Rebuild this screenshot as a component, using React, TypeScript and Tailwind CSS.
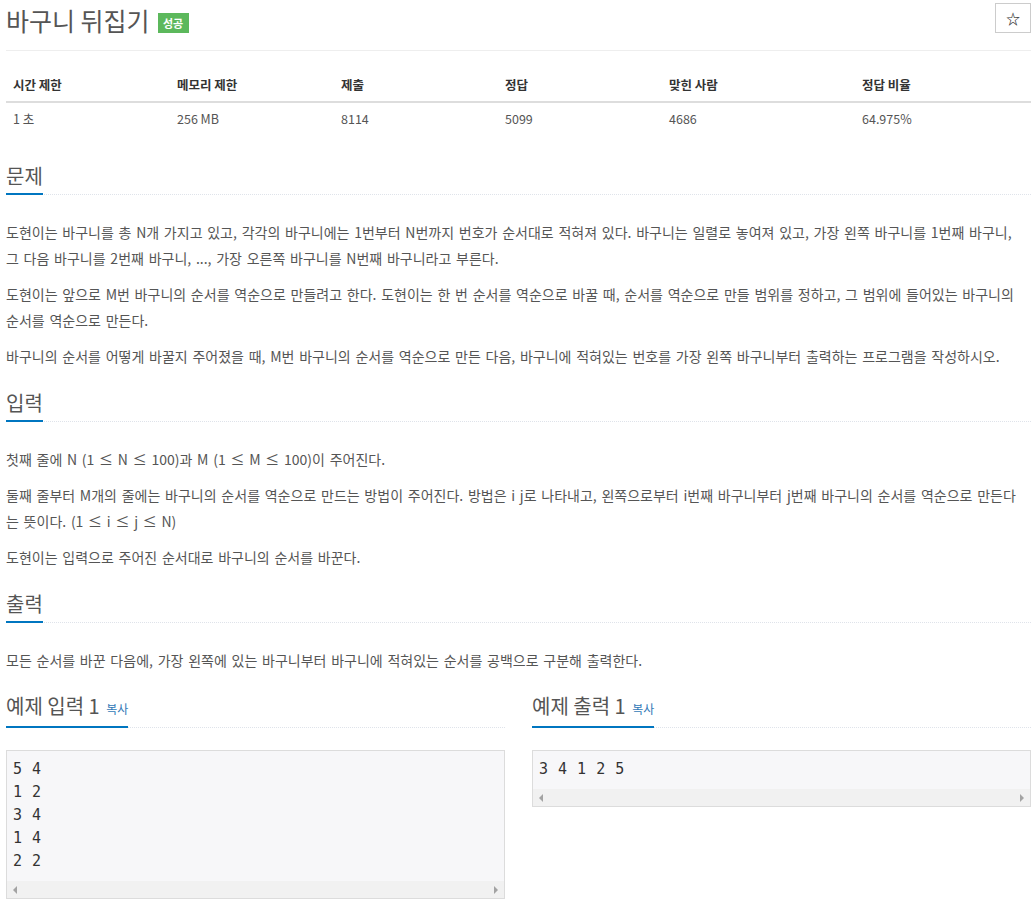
import React from 'react';

const font = { fontFamily: '"Noto Sans CJK KR", "Noto Sans", sans-serif' };

const stats = [
    { label: '시간 제한', value: '1 초', w: 'w-[164px]' },
    { label: '메모리 제한', value: '256 MB', w: 'w-[164px]' },
    { label: '제출', value: '8114', w: 'w-[164px]' },
    { label: '정답', value: '5099', w: 'w-[164px]' },
    { label: '맞힌 사람', value: '4686', w: 'w-[193px]' },
    { label: '정답 비율', value: '64.975%', w: 'w-[176px]' },
];

function Headline({ children }: { children: React.ReactNode }) {
    return (
        <div className="border-b border-dotted border-[#dfe3ea] mb-[24px]">
            <h2 className="inline-block border-b-2 border-[#0076c0] mb-[-1px] pb-[2px] text-[20px] leading-[30px] text-[#555] font-normal">
                {children}
            </h2>
        </div>
    );
}

function Para({ children }: { children: React.ReactNode }) {
    return (
        <p className="text-[14px] leading-[26px] text-[#555] mb-[10px] whitespace-nowrap [word-spacing:1.6px]">
            {children}
        </p>
    );
}

function ScrollBar() {
    return (
        <div className="h-[17px] bg-[#f1f1f1] flex items-center justify-between px-[5px]">
            <svg width="6" height="8" viewBox="0 0 6 8">
                <polygon points="5,0 5,8 1,4" fill="#a3a3a3" />
            </svg>
            <svg width="6" height="8" viewBox="0 0 6 8">
                <polygon points="1,0 1,8 5,4" fill="#a3a3a3" />
            </svg>
        </div>
    );
}

function Sample({ title, lines }: { title: string; lines: string[] }) {
    return (
        <div>
            <div className="border-b border-dotted border-[#dfe3ea] mb-[22px]">
                <h2 className="inline-block border-b-2 border-[#0076c0] mb-[-1px] pb-[2px] text-[20px] leading-[30px] text-[#555] font-normal">
                    {title} <span className="text-[12px] text-[#337ab7] ml-[2px]">복사</span>
                </h2>
            </div>
            <div className="border border-[#dcdcdc] bg-[#f7f7f9]">
                <pre
                    className="pt-[7px] pb-[8px] px-[6px] text-[15px] leading-[23px] text-[#333] [word-spacing:1px]"
                    style={{ fontFamily: '"DejaVu Sans Mono", monospace' }}
                >
                    {lines.join('\n')}
                </pre>
                <ScrollBar />
            </div>
        </div>
    );
}

export default function App() {
    return (
        <div className="bg-white min-h-[905px] pl-[6px] pr-[5px]" style={font}>
            {/* Title */}
            <div className="flex justify-between items-start border-b border-[#eee] h-[51px]">
                <div className="flex items-start mt-[5px]">
                    <h1 className="text-[25px] leading-[30px] text-[#555] font-normal">바구니 뒤집기</h1>
                    <span className="ml-[8px] mt-[8px] w-[31px] h-[20px] bg-[#5cb85c] text-white text-[11px] font-bold flex items-center justify-center">
                        성공
                    </span>
                </div>
                <button className="mt-[3px] w-[36px] h-[30px] border border-[#ccc] bg-white flex items-center justify-center text-[14px] font-bold text-[#333]">
                    ☆
                </button>
            </div>

            {/* Stats table */}
            <div className="mt-[18px] mb-[26px]">
                <div className="flex border-b-2 border-[#ddd]">
                    {stats.map((s) => (
                        <div key={s.label} className={`${s.w} px-[7px] py-[7px] text-[12.5px] leading-[18px] font-bold text-[#333]`}>
                            {s.label}
                        </div>
                    ))}
                </div>
                <div className="flex">
                    {stats.map((s) => (
                        <div key={s.label} className={`${s.w} px-[7px] py-[7px] text-[12.5px] leading-[18px] text-[#555]`}>
                            {s.value}
                        </div>
                    ))}
                </div>
            </div>

            {/* 문제 */}
            <section className="mb-[19px]">
                <Headline>문제</Headline>
                <Para>
                    도현이는 바구니를 총 N개 가지고 있고, 각각의 바구니에는 1번부터 N번까지 번호가 순서대로 적혀져 있다. 바구니는 일렬로 놓여져 있고, 가장 왼쪽 바구니를 1번째 바구니,
                    <br />
                    그 다음 바구니를 2번째 바구니, ..., 가장 오른쪽 바구니를 N번째 바구니라고 부른다.
                </Para>
                <Para>
                    도현이는 앞으로 M번 바구니의 순서를 역순으로 만들려고 한다. 도현이는 한 번 순서를 역순으로 바꿀 때, 순서를 역순으로 만들 범위를 정하고, 그 범위에 들어있는 바구니의
                    <br />
                    순서를 역순으로 만든다.
                </Para>
                <Para>
                    바구니의 순서를 어떻게 바꿀지 주어졌을 때, M번 바구니의 순서를 역순으로 만든 다음, 바구니에 적혀있는 번호를 가장 왼쪽 바구니부터 출력하는 프로그램을 작성하시오.
                </Para>
            </section>

            {/* 입력 */}
            <section className="mb-[19px]">
                <Headline>입력</Headline>
                <Para>첫째 줄에 N (1 ≤ N ≤ 100)과 M (1 ≤ M ≤ 100)이 주어진다.</Para>
                <Para>
                    둘째 줄부터 M개의 줄에는 바구니의 순서를 역순으로 만드는 방법이 주어진다. 방법은 i j로 나타내고, 왼쪽으로부터 i번째 바구니부터 j번째 바구니의 순서를 역순으로 만든다
                    <br />
                    는 뜻이다. (1 ≤ i ≤ j ≤ N)
                </Para>
                <Para>도현이는 입력으로 주어진 순서대로 바구니의 순서를 바꾼다.</Para>
            </section>

            {/* 출력 */}
            <section className="mb-[18px]">
                <Headline>출력</Headline>
                <Para>모든 순서를 바꾼 다음에, 가장 왼쪽에 있는 바구니부터 바구니에 적혀있는 순서를 공백으로 구분해 출력한다.</Para>
            </section>

            {/* 예제 */}
            <div className="grid grid-cols-2 gap-[27px] items-start">
                <Sample title="예제 입력 1" lines={['5 4', '1 2', '3 4', '1 4', '2 2']} />
                <Sample title="예제 출력 1" lines={['3 4 1 2 5']} />
            </div>
        </div>
    );
}
